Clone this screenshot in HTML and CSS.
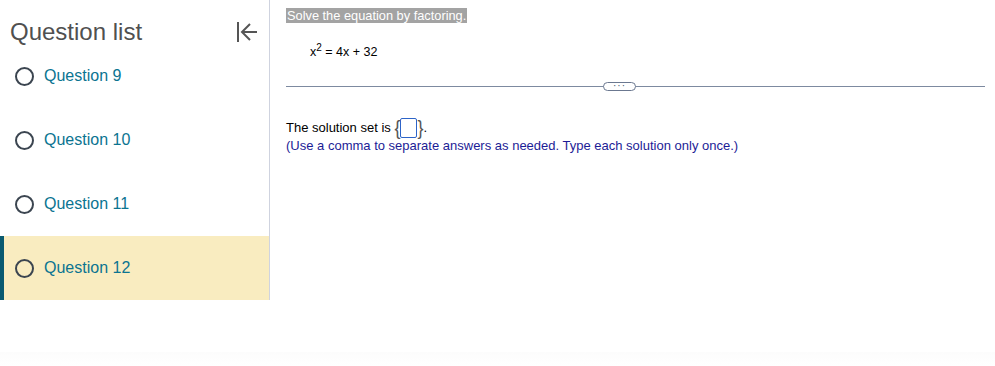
FILE: index.html
```html
<!DOCTYPE html>
<html lang="en">
<head>
    <meta charset="UTF-8">
    <title>Question</title>
    <link rel="stylesheet" href="styles.css">
</head>
<body>
    <div class="page">
        <div class="sidebar">
            <div class="sidebar-head">
                <h2>Question list</h2>
                <svg class="collapse" width="24" height="24" viewBox="0 0 24 24">
                    <path d="M3 2v20M22 12H7M15 4l-8 8 8 8" fill="none" stroke="#555" stroke-width="2"/>
                </svg>
            </div>
            <ul class="qlist">
                <li class="qitem"><span class="radio"></span>Question 9</li>
                <li class="qitem"><span class="radio"></span>Question 10</li>
                <li class="qitem"><span class="radio"></span>Question 11</li>
                <li class="qitem active"><span class="radio"></span>Question 12</li>
            </ul>
        </div>
        <div class="main">
            <div class="prompt"><span class="hl">Solve the equation by factoring.</span></div>
            <div class="equation">x<sup>2</sup> = 4x + 32</div>
            <div class="divider">
                <span class="more">&middot;&middot;&middot;</span>
            </div>
            <div class="answer">The solution set is <span class="brace">{</span><span class="box"></span><span class="brace">}</span>.</div>
            <div class="hint">(Use a comma to separate answers as needed. Type each solution only once.)</div>
        </div>
    </div>
    <div class="footer-fade"></div>
</body>
</html>
```

FILE: styles.css
```css
body {
    margin: 0;
    background-color: #ffffff;
    font-family: "Liberation Sans", Arial, sans-serif;
    height: 366px;
    overflow: hidden;
    position: relative;
}
.page {
    display: flex;
    align-items: flex-start;
}
.sidebar {
    width: 269px;
    border-right: 1px solid #cfd3df;
    flex-shrink: 0;
}
.sidebar-head {
    display: flex;
    justify-content: space-between;
    align-items: center;
    height: 44px;
    padding: 0 10px 0 10px;
}
.sidebar-head h2 {
    margin: 0;
    font-size: 24px;
    font-weight: normal;
    color: #505050;
    padding-top: 19px;
}
.collapse {
    margin-top: 20px;
}
.qlist {
    list-style: none;
    margin: 0;
    padding: 0;
}
.qitem {
    height: 64px;
    display: flex;
    align-items: center;
    padding-left: 15px;
    font-size: 16px;
    color: #0b7491;
}
.qitem.active {
    background-color: #f9ecc0;
    border-left: 4px solid #0a5a70;
    padding-left: 11px;
}
.radio {
    width: 15px;
    height: 15px;
    border: 2px solid #3b4550;
    border-radius: 50%;
    margin-right: 10px;
}
.main {
    flex: 1;
    padding: 8px 10px 0 16px;
    font-size: 13px;
    color: #000;
}
.prompt {
    height: 16px;
}
.hl {
    background-color: #a3a3a3;
    color: #ffffff;
    font-size: 12.8px;
    padding: 0 1px;
}
.equation {
    margin: 21px 0 0 24px;
    font-size: 12.5px;
}
.equation sup {
    font-size: 10px;
    line-height: 0;
}
.divider {
    margin-top: 27px;
    border-top: 1px solid #7d8aa0;
    position: relative;
    height: 0;
}
.more {
    position: absolute;
    left: 317px;
    top: -5px;
    width: 31px;
    height: 7px;
    border: 1px solid #6b7890;
    border-radius: 5px;
    background-color: #ffffff;
    font-size: 10px;
    line-height: 5px;
    text-align: center;
    color: #4a5a70;
    letter-spacing: 1px;
}
.answer {
    margin-top: 31px;
    height: 20px;
    line-height: 20px;
}
.brace {
    display: inline-block;
    color: #555;
    font-size: 18px;
    vertical-align: top;
    transform: scaleY(1.15);
}
.box {
    display: inline-block;
    width: 17px;
    height: 20px;
    border: 1px solid #2d64c8;
    border-radius: 2px;
    vertical-align: top;
    box-sizing: border-box;
    margin-top: 0;
}
.hint {
    margin-top: 0;
    color: #1c1c96;
}
.footer-fade {
    position: absolute;
    left: 0;
    right: 0;
    bottom: 0;
    height: 14px;
    background: linear-gradient(#fcfcfc, #ffffff);
}
```
